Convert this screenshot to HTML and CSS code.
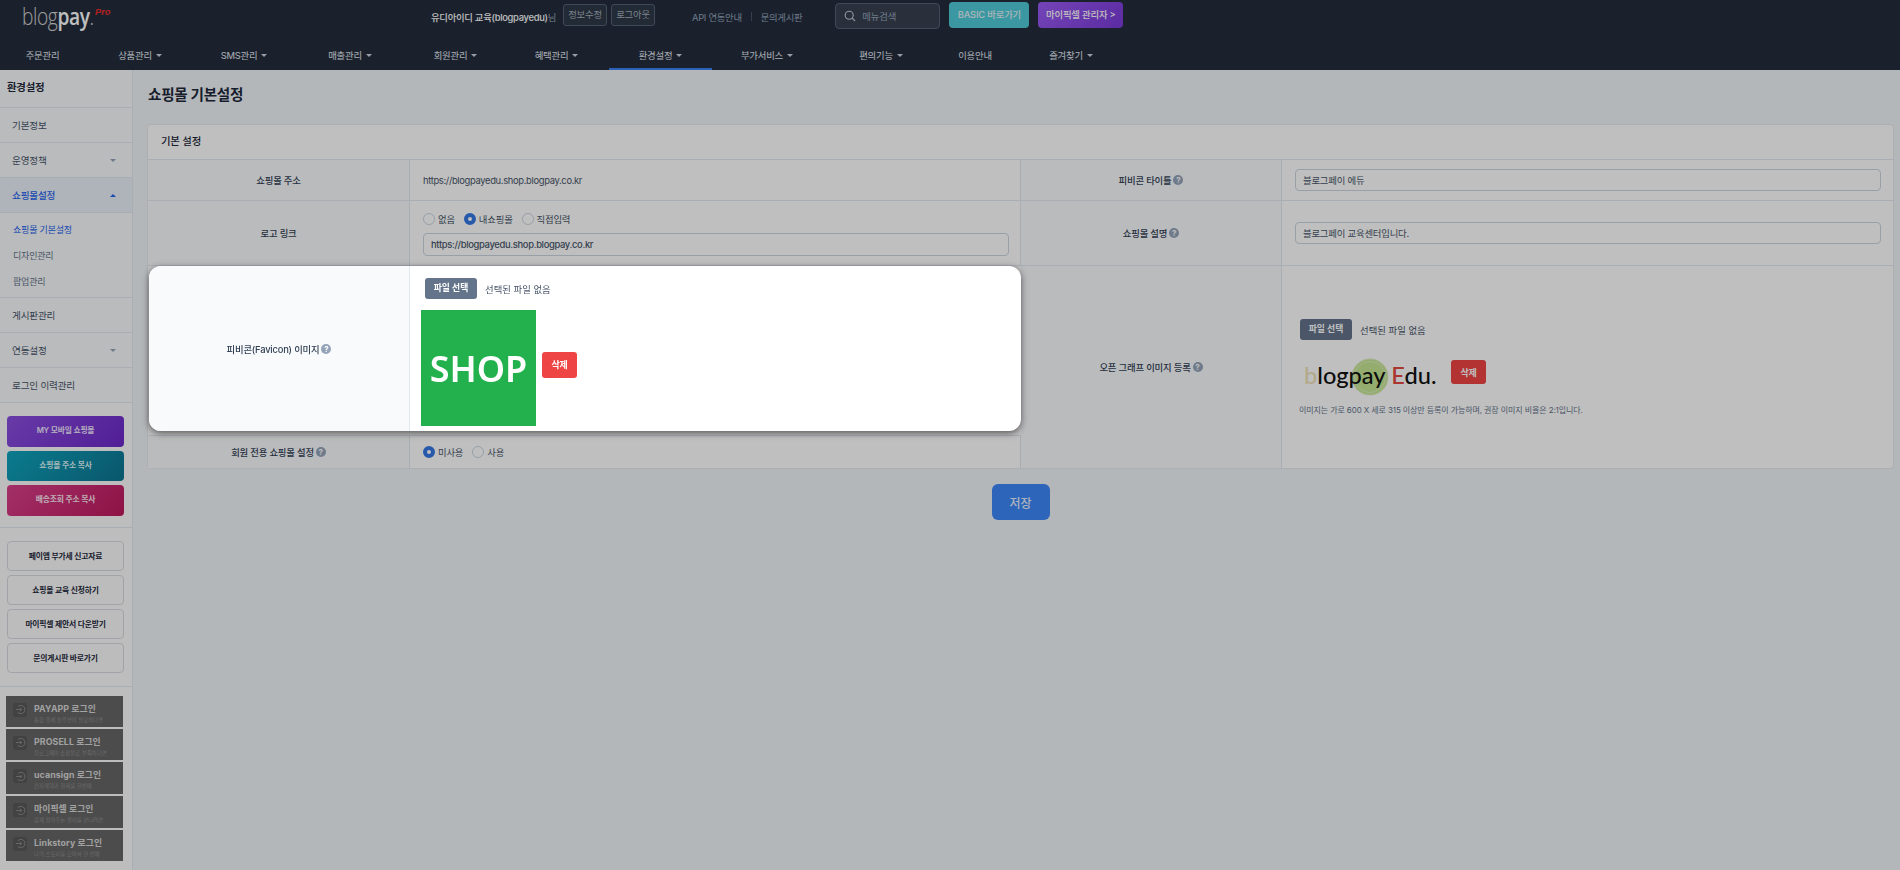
FILE: index.html
```html
<!DOCTYPE html>
<html lang="ko">
<head>
    <meta charset="UTF-8">
    <meta name="viewport" content="width=device-width, initial-scale=1.0">
    <title>쇼핑몰 기본설정</title>
    <link rel="stylesheet" href="styles.css">
</head>
<body>

    <header class="header">
        <div class="topbar">
            <div class="logo-box">
                <a class="logo"><span class="logo-thin">blog</span><b>pay</b><span class="logo-thin">.</span></a>
                <i class="logo-pro">Pro</i>
            </div>
            <span class="greeting"><b>유디아이디 교육(blogpayedu)</b>님</span>
            <a class="btn-outline">정보수정</a>
            <a class="btn-outline">로그아웃</a>
            <a class="top-link api-link">API 연동안내</a>
            <span class="top-sep"></span>
            <a class="top-link">문의게시판</a>
            <div class="search">
                <svg width="12" height="12" viewBox="0 0 12 12" fill="none" stroke="#c3ccd8" stroke-width="1.1"><circle cx="5.2" cy="5.2" r="4"/><path d="M8.2 8.2L11 11"/></svg>
                <span>메뉴검색</span>
            </div>
            <a class="btn-top btn-basic">BASIC 바로가기</a>
            <a class="btn-top btn-pixel">마이픽셀 관리자 &gt;</a>
        </div>
        <nav class="nav">
            <a>주문관리</a>
            <a class="caret">상품관리</a>
            <a class="caret">SMS관리</a>
            <a class="caret">매출관리</a>
            <a class="caret">회원관리</a>
            <a class="caret">혜택관리</a>
            <a class="caret active">환경설정</a>
            <a class="caret">부가서비스</a>
            <a class="caret">편의기능</a>
            <a>이용안내</a>
            <a class="caret">즐겨찾기</a>
        </nav>
    </header>

    <div class="layout">
        <aside class="sidebar">
            <h3 class="side-title">환경설정</h3>
            <a class="side-item">기본정보</a>
            <a class="side-item down">운영정책</a>
            <a class="side-item up open">쇼핑몰설정</a>
            <div class="side-sub">
                <a class="current">쇼핑몰 기본설정</a>
                <a>디자인관리</a>
                <a>팝업관리</a>
            </div>
            <a class="side-item">게시판관리</a>
            <a class="side-item down">연동설정</a>
            <a class="side-item">로그인 이력관리</a>

            <div class="side-group color-group">
                <a class="side-btn purple">MY 모바일 쇼핑몰</a>
                <a class="side-btn teal">쇼핑몰 주소 복사</a>
                <a class="side-btn pink">배송조회 주소 복사</a>
            </div>
            <div class="side-group plain-group">
                <a class="side-btn plain">페이앱 부가세 신고자료</a>
                <a class="side-btn plain">쇼핑몰 교육 신청하기</a>
                <a class="side-btn plain">마이픽셀 제안서 다운받기</a>
                <a class="side-btn plain">문의게시판 바로가기</a>
            </div>
            <div class="banners">
                <a class="banner">
                    <span class="banner-icon"><svg width="11" height="11" viewBox="0 0 12 12" fill="none" stroke="#8f8f8f" stroke-width="1"><path d="M3 3a4.5 4.5 0 1 1 0 6M1 6h6M5.5 4.2L7.3 6 5.5 7.8"/></svg></span>
                    <span class="banner-text"><b>PAYAPP 로그인</b><small>통합 결제 솔루션이 필요하다면</small></span>
                </a>
                <a class="banner">
                    <span class="banner-icon"><svg width="11" height="11" viewBox="0 0 12 12" fill="none" stroke="#8f8f8f" stroke-width="1"><path d="M3 3a4.5 4.5 0 1 1 0 6M1 6h6M5.5 4.2L7.3 6 5.5 7.8"/></svg></span>
                    <span class="banner-text"><b>PROSELL 로그인</b><small>블로그페이 쇼핑몰로 부족하다면</small></span>
                </a>
                <a class="banner tall">
                    <span class="banner-icon"><svg width="11" height="11" viewBox="0 0 12 12" fill="none" stroke="#8f8f8f" stroke-width="1"><path d="M3 3a4.5 4.5 0 1 1 0 6M1 6h6M5.5 4.2L7.3 6 5.5 7.8"/></svg></span>
                    <span class="banner-text"><b>ucansign 로그인</b><small>전자계약과 결제를 한번에</small></span>
                </a>
                <a class="banner tall">
                    <span class="banner-icon"><svg width="11" height="11" viewBox="0 0 12 12" fill="none" stroke="#8f8f8f" stroke-width="1"><path d="M3 3a4.5 4.5 0 1 1 0 6M1 6h6M5.5 4.2L7.3 6 5.5 7.8"/></svg></span>
                    <span class="banner-text"><b>마이픽셀 로그인</b><small>함께 팔아주는 셀러를 만나려면</small></span>
                </a>
                <a class="banner">
                    <span class="banner-icon"><svg width="11" height="11" viewBox="0 0 12 12" fill="none" stroke="#8f8f8f" stroke-width="1"><path d="M3 3a4.5 4.5 0 1 1 0 6M1 6h6M5.5 4.2L7.3 6 5.5 7.8"/></svg></span>
                    <span class="banner-text"><b>Linkstory 로그인</b><small>나의 스토리를 모아서 한 번에</small></span>
                </a>
            </div>
        </aside>

        <main class="main">
            <h1 class="page-title">쇼핑몰 기본설정</h1>
            <section class="card">
                <h2 class="card-title">기본 설정</h2>
                <div class="form-grid">
                    <div class="cell th">쇼핑몰 주소</div>
                    <div class="cell td url-text">https://blogpayedu.shop.blogpay.co.kr</div>
                    <div class="cell th">피비콘 타이틀 <span class="help">?</span></div>
                    <div class="cell td last"><div class="text-input">블로그페이 에듀</div></div>

                    <div class="cell th">로고 링크</div>
                    <div class="cell td stack">
                        <div class="radios">
                            <span class="radio"></span><span>없음</span>
                            <span class="radio on"></span><span>내쇼핑몰</span>
                            <span class="radio"></span><span>직접입력</span>
                        </div>
                        <div class="text-input url url-text">https://blogpayedu.shop.blogpay.co.kr</div>
                    </div>
                    <div class="cell th">쇼핑몰 설명 <span class="help">?</span></div>
                    <div class="cell td last"><div class="text-input">블로그페이 교육센터입니다.</div></div>

                    <div class="favicon-slot">
                        <div class="favicon-row">
                            <div class="favicon-label">피비콘(Favicon) 이미지 <span class="help">?</span></div>
                            <div class="favicon-body">
                                <div class="file-line">
                                    <span class="file-btn">파일 선택</span>
                                    <span>선택된 파일 없음</span>
                                </div>
                                <div class="preview-line">
                                    <div class="shop-img">SHOP</div>
                                    <span class="del-btn">삭제</span>
                                </div>
                            </div>
                        </div>
                    </div>

                    <div class="cell th og-th">오픈 그래프 이미지 등록 <span class="help">?</span></div>
                    <div class="cell td og-td last">
                        <div class="file-line">
                            <span class="file-btn">파일 선택</span>
                            <span>선택된 파일 없음</span>
                        </div>
                        <div class="og-preview">
                            <svg class="og-logo" width="136" height="38" viewBox="0 0 136 38">
                                <circle cx="66" cy="19" r="18" fill="#c6e692" stroke="#dcefc0" stroke-width="1"/>
                                <circle cx="66" cy="19" r="15.5" fill="none" stroke="#dcefc0" stroke-width="1"/>
                                <text x="0" y="26" class="og-text"><tspan fill="#eee2b8">b</tspan><tspan fill="#111">logpay</tspan><tspan dx="6" fill="#e2483f">E</tspan><tspan fill="#111">du.</tspan></text>
                            </svg>
                            <span class="del-btn">삭제</span>
                        </div>
                        <p class="hint">이미지는 가로 600 X 세로 315 이상만 등록이 가능하며, 권장 이미지 비율은 2:1입니다.</p>
                    </div>

                    <div class="cell th no-bottom">회원 전용 쇼핑몰 설정 <span class="help">?</span></div>
                    <div class="cell td no-bottom">
                        <div class="radios">
                            <span class="radio on"></span><span>미사용</span>
                            <span class="radio"></span><span>사용</span>
                        </div>
                    </div>
                </div>
            </section>
            <div class="actions">
                <button class="save-btn">저장</button>
            </div>
        </main>
    </div>

    <div class="overlay"></div>

</body>
</html>
```

FILE: styles.css
```css
* {
    box-sizing: border-box;
}
body {
    margin: 0;
    height: 870px;
    overflow: hidden;
    font-family: Inter, "Noto Sans CJK KR", sans-serif;
    font-size: 9.4px;
    color: #334155;
    background-color: #f1f5f9;
    letter-spacing: -0.2px;
}
a {
    color: inherit;
    text-decoration: none;
}
.overlay {
    position: fixed;
    top: 0;
    left: 0;
    right: 0;
    bottom: 0;
    background: rgba(0,0,0,0.25);
    z-index: 10;
}

/* header */
.header {
    height: 70px;
    background: #232d3d;
    color: #e2e8f0;
}
.topbar {
    height: 40px;
    display: flex;
    align-items: flex-start;
    padding-top: 2px;
}
.logo-box {
    width: 409px;
    padding-left: 22px;
    display: flex;
    align-items: flex-start;
}
.logo {
    width: 73px;
    margin-top: 1px;
    font-family: "Open Sans", sans-serif;
    font-size: 24px;
    line-height: 26px;
    letter-spacing: -0.5px;
    color: #fff;
    white-space: nowrap;
    transform: scaleX(0.8);
    transform-origin: left center;
}
.logo b {
    font-weight: 600;
}
.logo-thin {
    font-weight: 300;
    color: #d4d4d4;
}
.logo-pro {
    margin-top: 5px;
    font-family: "Liberation Sans", sans-serif;
    font-size: 9.2px;
    font-weight: 700;
    color: #ee2c2c;
    letter-spacing: 0;
}
.greeting {
    margin-top: 8px;
    margin-left: 22px;
    width: 132px;
    color: #94a3b8;
    white-space: nowrap;
    letter-spacing: -0.3px;
}
.greeting b {
    color: #fff;
    font-weight: 500;
}
.btn-outline {
    width: 44px;
    height: 22px;
    margin-top: 2px;
    margin-right: 4px;
    border: 1px solid #566274;
    border-radius: 3px;
    background: #2e3948;
    color: #a5afbc;
    text-align: center;
    line-height: 20px;
}
.top-link {
    margin-top: 8px;
    color: #94a3b8;
    letter-spacing: -0.3px;
}
.api-link {
    margin-left: 33px;
}
.top-sep {
    width: 1px;
    height: 9px;
    margin: 10px 9px 0;
    background: #475569;
}
.search {
    width: 105px;
    height: 26px;
    margin-top: 1px;
    margin-left: 33px;
    padding-left: 8px;
    display: flex;
    align-items: center;
    gap: 6px;
    border: 1px solid #566274;
    border-radius: 4px;
    background: #374151;
    color: #94a3b8;
}
.btn-top {
    height: 26px;
    border-radius: 4px;
    text-align: center;
    line-height: 26px;
    color: #e2f2f5;
    font-weight: 500;
}
.btn-basic {
    width: 80px;
    margin-left: 9px;
    background: #4fcad8;
}
.btn-pixel {
    width: 85px;
    margin-left: 9px;
    background: linear-gradient(135deg, #9a5cf5, #7a3ad8);
    color: #fff;
}
.nav {
    height: 30px;
    display: grid;
    grid-template-columns: 85px 110px 98px 114px 97px 105px 103px 110px 118px 70px 122px;
}
.nav a {
    display: flex;
    align-items: center;
    justify-content: center;
    padding-bottom: 1px;
    color: #e2e8f0;
}
.nav .caret::after {
    content: "";
    margin-left: 4px;
    margin-top: 1px;
    border-top: 3px solid #cbd5e1;
    border-left: 3px solid transparent;
    border-right: 3px solid transparent;
}
.nav .active {
    border-bottom: 2px solid #3b82f6;
    padding: 2px 0 0;
}

/* sidebar */
.layout {
    display: flex;
}
.sidebar {
    width: 133px;
    height: 800px;
    flex-shrink: 0;
    background: #fdfdfd;
    border-right: 1px solid #e2e8f0;
}
.side-title {
    height: 38px;
    margin: 0;
    padding-left: 7px;
    line-height: 36px;
    font-size: 10.4px;
    font-weight: 700;
    color: #1e293b;
    background: #f8fafc;
    border-bottom: 1px solid #e2e8f0;
}
.side-item {
    height: 35px;
    padding: 0 16px 0 12px;
    display: flex;
    align-items: center;
    justify-content: space-between;
    font-size: 9.6px;
    color: #475569;
    background: #f8fafc;
    border-bottom: 1px solid #e2e8f0;
}
.side-item.down::after,
.side-item.up::after {
    content: "";
    border-left: 3px solid transparent;
    border-right: 3px solid transparent;
}
.side-item.down::after {
    border-top: 3px solid #94a3b8;
}
.side-item.up::after {
    border-bottom: 3px solid #2563eb;
}
.side-item.open {
    color: #2563eb;
    font-weight: 500;
    background: #eaf0f9;
}
.side-sub {
    height: 85px;
    padding-top: 4px;
    background: #f8fafc;
    border-bottom: 1px solid #e2e8f0;
}
.side-sub a {
    display: block;
    height: 26px;
    padding-left: 13px;
    line-height: 26px;
    font-size: 9px;
    color: #64748b;
}
.side-sub .current {
    color: #2563eb;
}
.side-group {
    display: flex;
    flex-direction: column;
    padding: 0 8px 0 7px;
    gap: 4px;
    border-bottom: 1px solid #e2e8f0;
}
.color-group {
    height: 125px;
    padding-top: 13px;
}
.plain-group {
    height: 159px;
    padding-top: 13px;
}
.side-btn {
    height: 30px;
    border-radius: 4px;
    text-align: center;
    line-height: 29px;
    font-size: 7.8px;
    font-weight: 600;
    letter-spacing: -0.2px;
}
.purple {
    height: 31px;
    color: #f1e8ff;
    background: linear-gradient(135deg, #8a4fe0, #6d28c9);
}
.teal {
    color: #dff6fa;
    background: linear-gradient(135deg, #0ea5bd, #0e7490);
}
.pink {
    height: 31px;
    color: #fde8f2;
    background: linear-gradient(135deg, #d9408a, #be185d);
}
.plain {
    color: #1e293b;
    background: #fbfbfb;
    border: 1px solid #d6dbe2;
}
.banners {
    display: flex;
    flex-direction: column;
    gap: 2px;
    padding: 9px 9px 0 6px;
}
.banner {
    height: 31px;
    padding-left: 7px;
    display: flex;
    align-items: center;
    gap: 7px;
    background: #666;
}
.banner.tall {
    height: 32px;
}
.banner-icon {
    width: 14px;
    height: 14px;
    margin-bottom: 4px;
    display: flex;
    align-items: center;
    justify-content: center;
    border-radius: 3px;
    background: #585858;
}
.banner-text {
    padding-top: 2px;
    display: flex;
    flex-direction: column;
    white-space: nowrap;
}
.banner-text b {
    font-size: 8.8px;
    line-height: 13px;
    font-weight: 700;
    letter-spacing: 0.1px;
    color: #d8d8d8;
}
.banner-text small {
    margin-top: 1px;
    font-size: 5.4px;
    line-height: 8px;
    color: #8e8e8e;
    letter-spacing: 0;
}

/* main */
.main {
    flex: 1;
    padding: 14px 7px 0 15px;
}
.page-title {
    height: 22px;
    margin: 0 0 19px;
    line-height: 22px;
    font-size: 14.6px;
    font-weight: 700;
    color: #1e293b;
    letter-spacing: -0.3px;
}
.card {
    background: #fff;
    border-radius: 3px;
    box-shadow: 0 0 2px rgba(0,0,0,0.15);
}
.card-title {
    height: 35px;
    margin: 0;
    padding-left: 13px;
    line-height: 33px;
    font-size: 10.4px;
    font-weight: 500;
    color: #1e293b;
    border-bottom: 1px solid #e2e8f0;
}
.form-grid {
    display: grid;
    grid-template-columns: 262px 611px 261px 611px;
    grid-template-rows: 41px 65px 170px 32px;
    align-items: stretch;
}
.cell {
    display: flex;
    align-items: center;
    border-right: 1px solid #e2e8f0;
    border-bottom: 1px solid #e2e8f0;
}
.th {
    justify-content: center;
    gap: 2px;
    background: #f8fafc;
    color: #334155;
    font-weight: 500;
}
.td {
    padding: 0 13px;
    color: #475569;
}
.td.last {
    padding: 0 12px 0 13px;
    border-right: none;
}
.url-text {
    letter-spacing: -0.33px;
}
.no-bottom {
    border-bottom: none;
}
.stack {
    flex-direction: column;
    align-items: stretch;
    justify-content: center;
    gap: 7px;
    padding-top: 1px;
}
.text-input {
    height: 22px;
    width: 100%;
    padding-left: 7px;
    line-height: 21px;
    color: #475569;
    background: #fff;
    border: 1px solid #cbd5e1;
    border-radius: 4px;
}
.text-input.url {
    height: 23px;
    width: 586px;
    font-weight: 500;
}
.radios {
    display: flex;
    align-items: center;
    gap: 3px;
}
.radio {
    width: 12px;
    height: 12px;
    margin-left: 6px;
    border: 1px solid #cbd5e1;
    border-radius: 50%;
    background: #fff;
}
.radio:first-child {
    margin-left: 0;
}
.radio.on {
    border: 4px solid #3577e5;
}
.help {
    display: inline-block;
    width: 10px;
    height: 10px;
    border-radius: 50%;
    background: #94a3b8;
    color: #fff;
    font-size: 8px;
    font-weight: 700;
    line-height: 10px;
    text-align: center;
    letter-spacing: 0;
}

/* highlighted row, stays above the overlay */
.favicon-slot {
    grid-column: 1 / 3;
    grid-row: 3;
    padding-left: 1px;
    border-bottom: 1px solid #e2e8f0;
}
.favicon-row {
    position: relative;
    z-index: 20;
    height: 165px;
    display: flex;
    background: #fff;
    border-radius: 12px;
    box-shadow: 0 2px 7px rgba(0,0,0,0.55);
    overflow: hidden;
}
.favicon-label {
    width: 261px;
    display: flex;
    align-items: center;
    justify-content: center;
    gap: 2px;
    background: #f8fafc;
    border-right: 1px solid #e2e8f0;
    color: #334155;
    font-weight: 500;
}
.favicon-body {
    flex: 1;
    padding: 12px 11px 0;
    color: #475569;
}
.favicon-body .file-line {
    margin-left: 4px;
}
.file-line {
    display: flex;
    align-items: center;
    gap: 8px;
    height: 21px;
    letter-spacing: 0;
}
.file-btn {
    width: 52px;
    height: 21px;
    border-radius: 3px;
    background: #64748b;
    color: #fff;
    text-align: center;
    line-height: 20px;
    font-size: 8.8px;
    font-weight: 600;
}
.preview-line {
    display: flex;
    align-items: center;
    gap: 6px;
    margin-top: 11px;
}
.shop-img {
    width: 115px;
    height: 116px;
    display: flex;
    align-items: center;
    justify-content: center;
    background: #22b14c;
    color: #fff;
    font-family: "Noto Sans", sans-serif;
    font-size: 36px;
    font-weight: 600;
    letter-spacing: 0;
}
.del-btn {
    width: 35px;
    height: 26px;
    margin-bottom: 6px;
    border-radius: 3px;
    background: #ef4444;
    color: #fff;
    text-align: center;
    line-height: 25px;
    font-size: 9px;
    font-weight: 600;
}
.og-th {
    grid-column: 3;
    grid-row: 3 / 5;
    border-bottom: none;
}
.td.og-td {
    grid-column: 4;
    grid-row: 3 / 5;
    border-bottom: none;
    padding: 0 0 0 17px;
    flex-direction: column;
    align-items: flex-start;
    justify-content: center;
}
.og-td .file-line {
    margin-left: 1px;
}
.og-preview {
    display: flex;
    align-items: center;
    gap: 11px;
    margin: 18px 0 0 5px;
}
.og-preview .del-btn {
    height: 24px;
    margin-bottom: 10px;
}
.og-text {
    font-family: Lato, sans-serif;
    font-size: 23.6px;
    font-weight: 500;
    letter-spacing: 0;
}
.hint {
    margin: 8px 0 0;
    font-size: 8px;
    color: #64748b;
    letter-spacing: -0.1px;
}
.actions {
    display: flex;
    justify-content: center;
    margin-top: 16px;
}
.save-btn {
    width: 58px;
    height: 36px;
    border: none;
    border-radius: 6px;
    background: #3b87f8;
    color: #e5efff;
    font-family: inherit;
    font-size: 12px;
    font-weight: 500;
}
```
